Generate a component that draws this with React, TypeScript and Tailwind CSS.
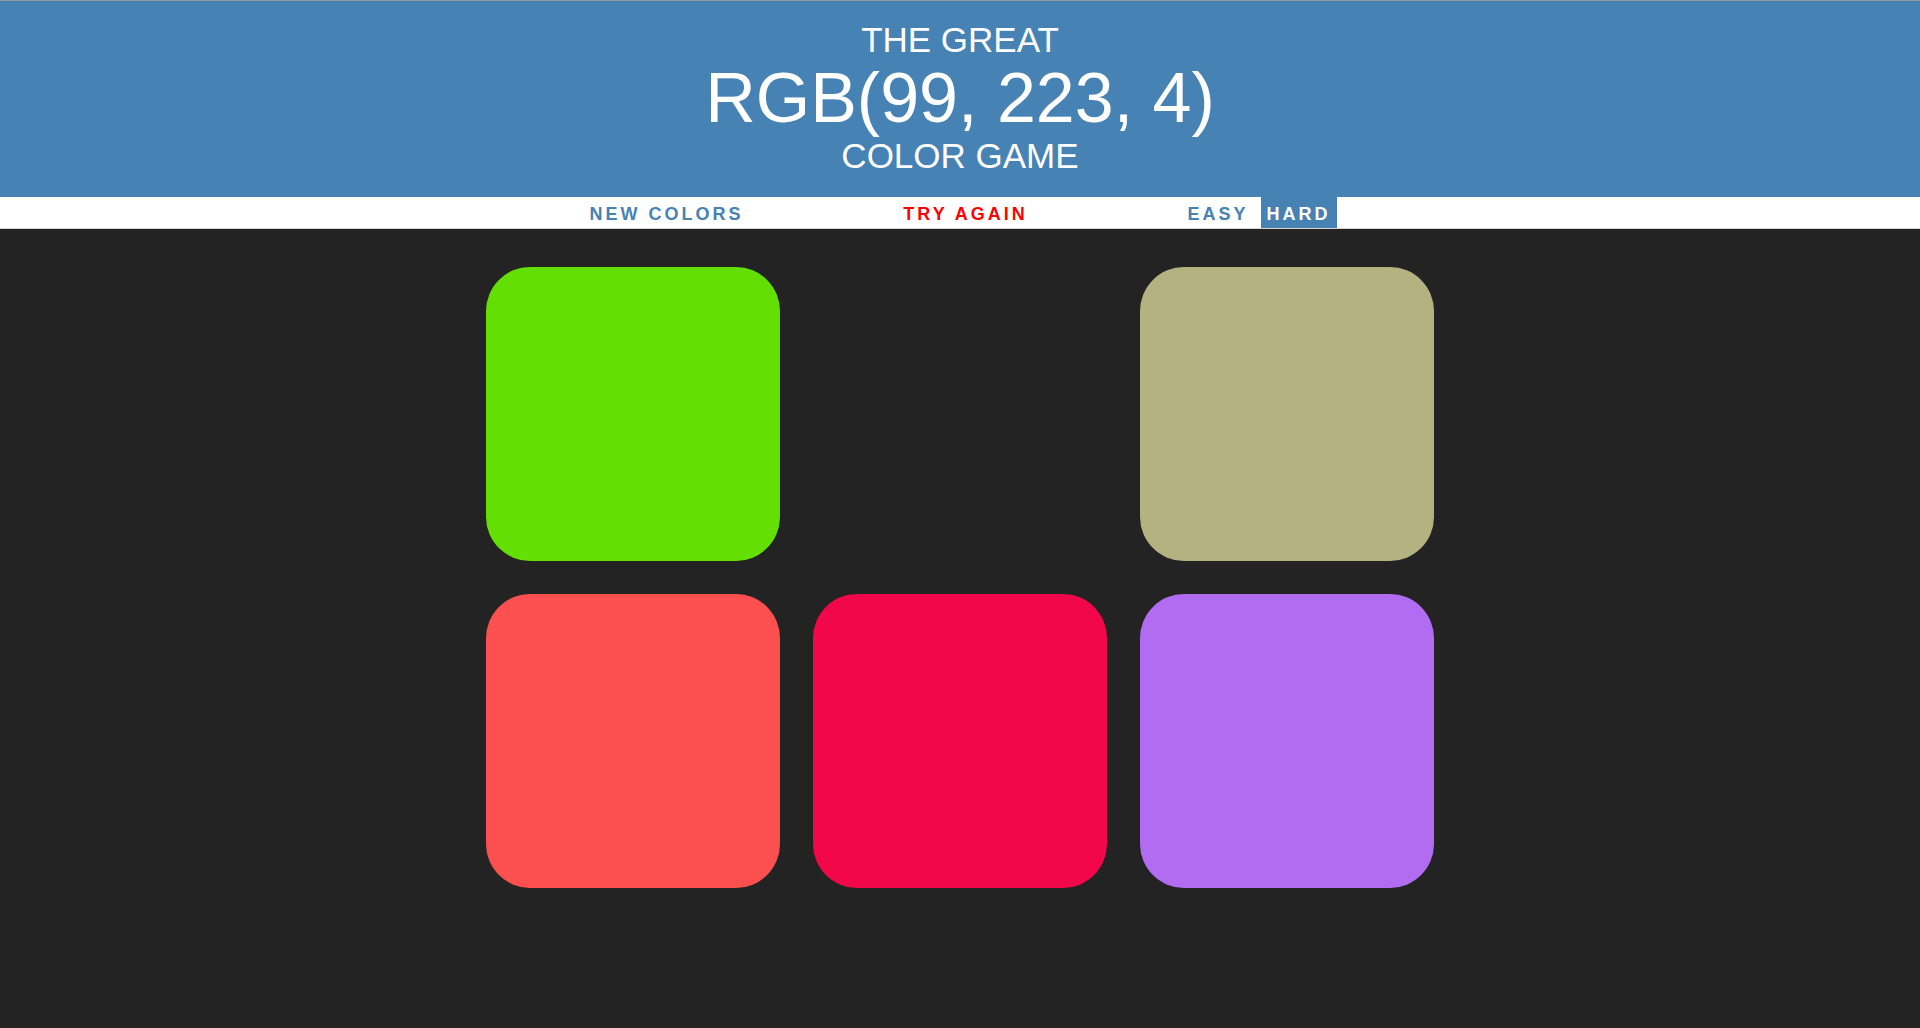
import React from "react";

const squares = [
  "#63df04",
  "#232323",
  "#b4b280",
  "#fc4f4f",
  "#f3074b",
  "#b26cf2",
];

const App = () => {
  return (
    <div className="min-h-screen bg-[#232323] font-['Liberation_Sans',Arial,sans-serif]">
      {/* Header */}
      <div className="bg-[#4682b4] border-t border-[#9a9a9a] pt-[20px] pb-[22px] text-center text-white uppercase leading-[1.1]">
        <div className="text-[35px]">The Great</div>
        <div className="text-[70px]">RGB(99, 223, 4)</div>
        <div className="text-[35px]">Color Game</div>
      </div>

      {/* Stripe */}
      <div className="bg-white h-[32px] border-b border-[#d4d4d4] flex justify-center items-stretch text-[18px] font-bold uppercase tracking-[3px]">
        <button className="px-[6px] pt-[4px] text-[#4682b4] uppercase">New Colors</button>
        <span className="w-[422px] mx-[5px] pt-[4px] flex items-center justify-center text-[#ff0000]">
          Try Again
        </span>
        <button className="px-[6px] pt-[4px] mr-[6px] text-[#4682b4] uppercase">Easy</button>
        <button className="px-[6px] pt-[4px] bg-[#4682b4] text-white uppercase">Hard</button>
      </div>

      {/* Squares */}
      <div className="w-[981px] mx-auto mt-[21px] flex flex-wrap">
        {squares.map((c, i) => (
          <div
            key={i}
            className="w-[294px] h-[294px] m-[16.5px] rounded-[44px]"
            style={{ backgroundColor: c }}
          />
        ))}
      </div>
    </div>
  );
};

export default App;
